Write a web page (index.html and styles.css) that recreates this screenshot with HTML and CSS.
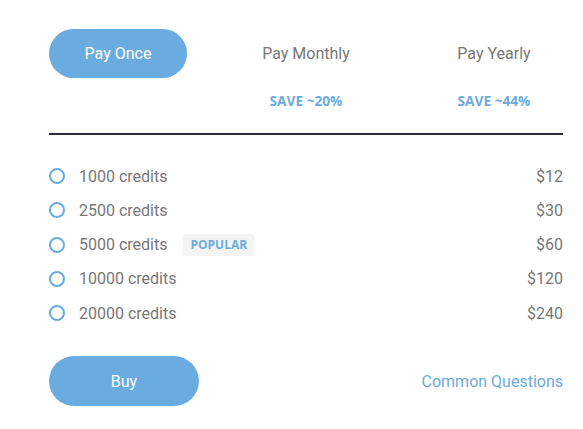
FILE: index.html
```html
<!DOCTYPE html>
<html>
<head>
<meta charset="utf-8">
<link rel="stylesheet" href="styles.css">
</head>
<body>
<div class="card">
  <div class="tabs">
    <div class="tab">
      <div class="tab-label active">Pay Once</div>
      <div class="save"></div>
    </div>
    <div class="tab">
      <div class="tab-label">Pay Monthly</div>
      <div class="save">SAVE ~20%</div>
    </div>
    <div class="tab">
      <div class="tab-label">Pay Yearly</div>
      <div class="save">SAVE ~44%</div>
    </div>
  </div>
  <div class="divider"></div>
  <ul class="options">
    <li class="option"><span class="radio"></span><span class="name">1000 credits</span><span class="price">$12</span></li>
    <li class="option"><span class="radio"></span><span class="name">2500 credits</span><span class="price">$30</span></li>
    <li class="option"><span class="radio"></span><span class="name">5000 credits</span><span class="badge">POPULAR</span><span class="price">$60</span></li>
    <li class="option"><span class="radio"></span><span class="name">10000 credits</span><span class="price">$120</span></li>
    <li class="option"><span class="radio"></span><span class="name">20000 credits</span><span class="price">$240</span></li>
  </ul>
  <div class="footer">
    <button class="buy">Buy</button>
    <a class="faq">Common Questions</a>
  </div>
</div>
</body>
</html>
```
FILE: styles.css
```css
* { box-sizing: border-box; }
body {
  margin: 0;
  background: #fff;
  font-family: Roboto, "Liberation Sans", sans-serif;
}
.card {
  width: 514px;
  margin-left: 49px;
  padding-top: 29px;
}
.tabs {
  display: flex;
  justify-content: space-between;
}
.tab {
  width: 138px;
  display: flex;
  flex-direction: column;
  align-items: center;
}
.tab-label {
  width: 138px;
  height: 49px;
  border-radius: 25px;
  display: flex;
  align-items: center;
  justify-content: center;
  font-size: 16px;
  color: #777;
}
.tab-label.active {
  background: #6aace0;
  color: #fff;
}
.save {
  height: 46px;
  padding-top: 14px;
  font-family: "Open Sans", sans-serif;
  font-weight: 700;
  font-size: 13.7px;
  color: #6aace0;
  line-height: 17px;
}
.divider {
  height: 2px;
  background: #2b2a3f;
  margin-top: 9px;
}
.options {
  list-style: none;
  margin: 24px 0 0;
  padding: 0;
}
.option {
  height: 34.25px;
  display: flex;
  align-items: center;
  font-size: 16px;
  color: #777;
}
.radio {
  width: 16px;
  height: 16px;
  border: 2px solid #6aace0;
  border-radius: 50%;
  margin-right: 14px;
}
.badge {
  margin-left: 16px;
  background: #f4f4f4;
  border-radius: 2px;
  padding: 0 7px;
  height: 22px;
  line-height: 22px;
  font-family: "Open Sans", sans-serif;
  font-weight: 700;
  font-size: 12px;
  color: #6aace0;
}
.price {
  margin-left: auto;
}
.footer {
  margin-top: 26px;
  display: flex;
  align-items: center;
  justify-content: space-between;
}
.buy {
  width: 150px;
  height: 50px;
  border: none;
  border-radius: 25px;
  background: #6aace0;
  color: #fff;
  font-family: Roboto, sans-serif;
  font-size: 16px;
}
.faq {
  font-size: 16px;
  color: #6aace0;
}
```
